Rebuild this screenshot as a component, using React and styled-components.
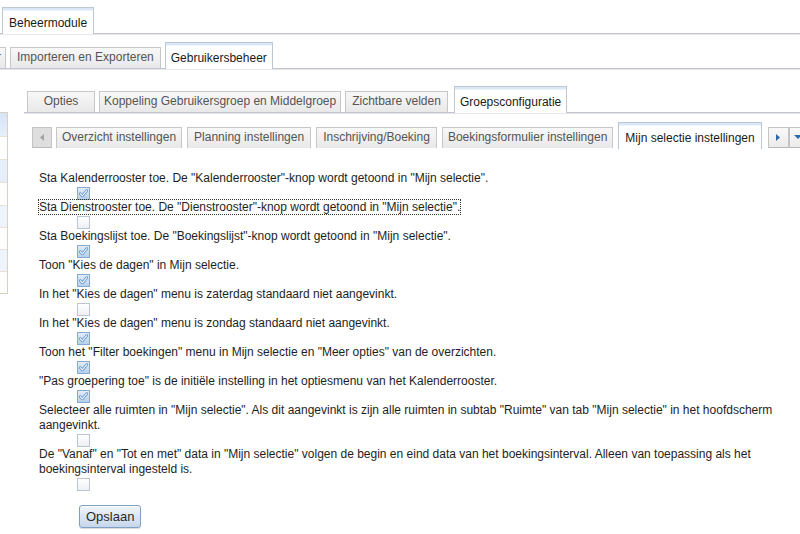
import React from 'react';
import styled, { createGlobalStyle, css } from 'styled-components';

const GlobalStyle = createGlobalStyle`
  html, body {
    margin: 0;
    padding: 0;
    background: #fff;
  }
  body {
    font-family: "Liberation Sans", Arial, sans-serif;
    font-size: 12px;
    color: #1e1e1e;
  }
  #root {
    width: 800px;
    height: 534px;
    overflow: hidden;
  }
`;

// one row of tabs, with the rule line the active tab sits on
const TabStrip = styled.div`
  display: flex;
  align-items: flex-end;
  gap: ${p => p.gap}px;
  padding: ${p => p.pad};
  white-space: nowrap;
  ${p => !p.bare && css`
    border-bottom: 1px solid #c3c6cc;
    box-shadow: 0 1px 0 #e4e6ea;
  `}
`;

const Tab = styled.div`
  flex-shrink: 0;
  box-sizing: border-box;
  min-width: ${p => p.minW || 0}px;
  height: 21px;
  margin-left: ${p => p.shift || 0}px;
  padding: 0 ${p => p.padX ?? 6}px;
  line-height: 19px;
  text-align: center;
  color: #555;
  background: linear-gradient(#f8f8f8, #e8e8e8);
  border: 1px solid #c7c7c7;
  border-bottom: none;
  ${p => p.active && css`
    height: 27px;
    padding-top: 6px;
    margin-bottom: -1px;
    color: #1a1a1a;
    background: #fff;
    border-color: #bdc7d2;
    box-shadow: inset 0 2px 0 #d9e7f6, inset 0 3px 0 #eef4fb;
  `}
`;

const ScrollButton = styled.div`
  flex-shrink: 0;
  box-sizing: border-box;
  display: flex;
  align-items: center;
  justify-content: center;
  width: ${p => p.w}px;
  height: 21px;
  margin-left: ${p => p.shift || 0}px;
  border: 1px solid #c4c4c4;
  border-bottom-color: #b8b8b8;
  background: ${p => p.dim ? '#dedede' : 'linear-gradient(#f9f9f9, #ebebeb)'};
`;

const Body = styled.div`
  display: flex;
`;

const Sidebar = styled.div`
  flex-shrink: 0;
  align-self: flex-start;
  box-sizing: border-box;
  width: 8px;
  margin-top: 43px;
  border: 1px solid #d8d1c2;
  border-left: none;
`;

const SideRow = styled.div`
  height: ${p => p.h}px;
  background: ${p => p.tone};
  & + & {
    border-top: 1px solid #e8e2d6;
  }
`;

const Main = styled.div`
  flex: 1;
  min-width: 0;
  margin-left: 16px;
`;

const Settings = styled.div`
  padding: 23px 4px 0 15px;
`;

const Setting = styled.div`
  line-height: 15px;
`;

const Label = styled.span`
  outline: ${p => p.focused ? '1px dotted #333' : 'none'};
`;

const CheckRow = styled.div`
  height: 13px;
  padding: 1px 0 0 38px;
`;

const Box = styled.span`
  display: block;
  box-sizing: border-box;
  width: 13px;
  height: 13px;
  border: 1px solid ${p => p.on ? '#86a9d2' : '#bcc6d2'};
  background: ${p => p.on
    ? 'linear-gradient(#e2ecf9, #b7cfeb)'
    : 'linear-gradient(#ffffff, #edf0f4)'};
  svg {
    display: block;
  }
`;

const SaveButton = styled.button`
  display: block;
  box-sizing: border-box;
  height: 23px;
  margin: 14px 0 0 40px;
  padding: 0 6px;
  font: 13px "Liberation Sans", Arial, sans-serif;
  color: #2a2a2a;
  border: 1px solid #7f9fc4;
  border-radius: 3px;
  background: linear-gradient(#f0f5fb, #c6d7eb);
  box-shadow: inset 0 1px 0 #fff, 0 1px 1px rgba(0, 0, 0, 0.15);
`;

const settings = [
  { text: 'Sta Kalenderrooster toe. De "Kalenderrooster"-knop wordt getoond in "Mijn selectie".', on: true },
  { text: 'Sta Dienstrooster toe. De "Dienstrooster"-knop wordt getoond in "Mijn selectie".', on: false, focused: true },
  { text: 'Sta Boekingslijst toe. De "Boekingslijst"-knop wordt getoond in "Mijn selectie".', on: true },
  { text: 'Toon "Kies de dagen" in Mijn selectie.', on: true },
  { text: 'In het "Kies de dagen" menu is zaterdag standaard niet aangevinkt.', on: false },
  { text: 'In het "Kies de dagen" menu is zondag standaard niet aangevinkt.', on: true },
  { text: 'Toon het "Filter boekingen" menu in Mijn selectie en "Meer opties" van de overzichten.', on: true },
  { text: '"Pas groepering toe" is de initiële instelling in het optiesmenu van het Kalenderrooster.', on: true },
  { text: 'Selecteer alle ruimten in "Mijn selectie". Als dit aangevinkt is zijn alle ruimten in subtab "Ruimte" van tab "Mijn selectie" in het hoofdscherm aangevinkt.', on: false },
  { text: 'De "Vanaf" en "Tot en met" data in "Mijn selectie" volgen de begin en eind data van het boekingsinterval. Alleen van toepassing als het boekingsinterval ingesteld is.', on: false },
];

const sideRows = [
  { h: 23, tone: 'linear-gradient(#d6e4f5, #e7effa)' },
  { h: 22, tone: '#fff' },
  { h: 22, tone: '#e6eefa' },
  { h: 22, tone: '#fff' },
  { h: 21, tone: '#eef4fc' },
  { h: 21, tone: '#fff' },
  { h: 21, tone: '#eef4fc' },
  { h: 21, tone: '#fff' },
];

function Checkbox({ on }) {
  return (
    <Box on={on}>
      {on && (
        <svg width="11" height="11" viewBox="0 0 11 11">
          <path d="M2.2 5.6 L4.4 7.8 L8.8 2.6" fill="none" stroke="#4f8acc" strokeWidth="2.6" strokeLinecap="round" strokeLinejoin="round" />
          <path d="M2.2 5.6 L4.4 7.8 L8.8 2.6" fill="none" stroke="#fff" strokeWidth="1.1" strokeLinecap="round" strokeLinejoin="round" />
        </svg>
      )}
    </Box>
  );
}

function Arrow({ dir, color }) {
  const shapes = {
    left: 'M5 1 L1 4.5 L5 8 Z',
    right: 'M1 1 L5 4.5 L1 8 Z',
    down: 'M0 2 L8 2 L4 6 Z',
  };
  const w = dir === 'down' ? 8 : 6;
  return (
    <svg width={w} height="9" viewBox={`0 0 ${w} 9`}>
      <path d={shapes[dir]} fill={color} />
    </svg>
  );
}

export default function App() {
  return (
    <>
      <GlobalStyle />
      <TabStrip gap={4} pad="7px 0 0 2px">
        <Tab active>Beheermodule</Tab>
      </TabStrip>
      <TabStrip gap={4} pad="8px 0 0 0">
        <Tab shift={-4} padX={0} style={{ paddingRight: 4 }}>r</Tab>
        <Tab>Importeren en Exporteren</Tab>
        <Tab active padX={5}>Gebruikersbeheer</Tab>
      </TabStrip>
      <Body>
        <Sidebar>
          {sideRows.map((r, i) => <SideRow key={i} h={r.h} tone={r.tone} />)}
        </Sidebar>
        <Main>
          <TabStrip gap={4} pad="17px 0 0 3px">
            <Tab minW={68}>Opties</Tab>
            <Tab padX={4}>Koppeling Gebruikersgroep en Middelgroep</Tab>
            <Tab>Zichtbare velden</Tab>
            <Tab active padX={5} shift={2}>Groepsconfiguratie</Tab>
          </TabStrip>
          <TabStrip bare gap={5} pad="9px 0 0 8px">
            <ScrollButton dim w={20}><Arrow dir="left" color="#a3a3a3" /></ScrollButton>
            <Tab shift={-1} padX={5}>Overzicht instellingen</Tab>
            <Tab>Planning instellingen</Tab>
            <Tab>Inschrijving/Boeking</Tab>
            <Tab padX={5}>Boekingsformulier instellingen</Tab>
            <Tab active>Mijn selectie instellingen</Tab>
            <ScrollButton w={21} shift={1}><Arrow dir="right" color="#2f6aa8" /></ScrollButton>
            <ScrollButton w={18} shift={-5}><Arrow dir="down" color="#2f6aa8" /></ScrollButton>
          </TabStrip>
          <Settings>
            {settings.map((s, i) => (
              <Setting key={i}>
                <Label focused={s.focused}>{s.text}</Label>
                <CheckRow><Checkbox on={s.on} /></CheckRow>
              </Setting>
            ))}
            <SaveButton>Opslaan</SaveButton>
          </Settings>
        </Main>
      </Body>
    </>
  );
}
